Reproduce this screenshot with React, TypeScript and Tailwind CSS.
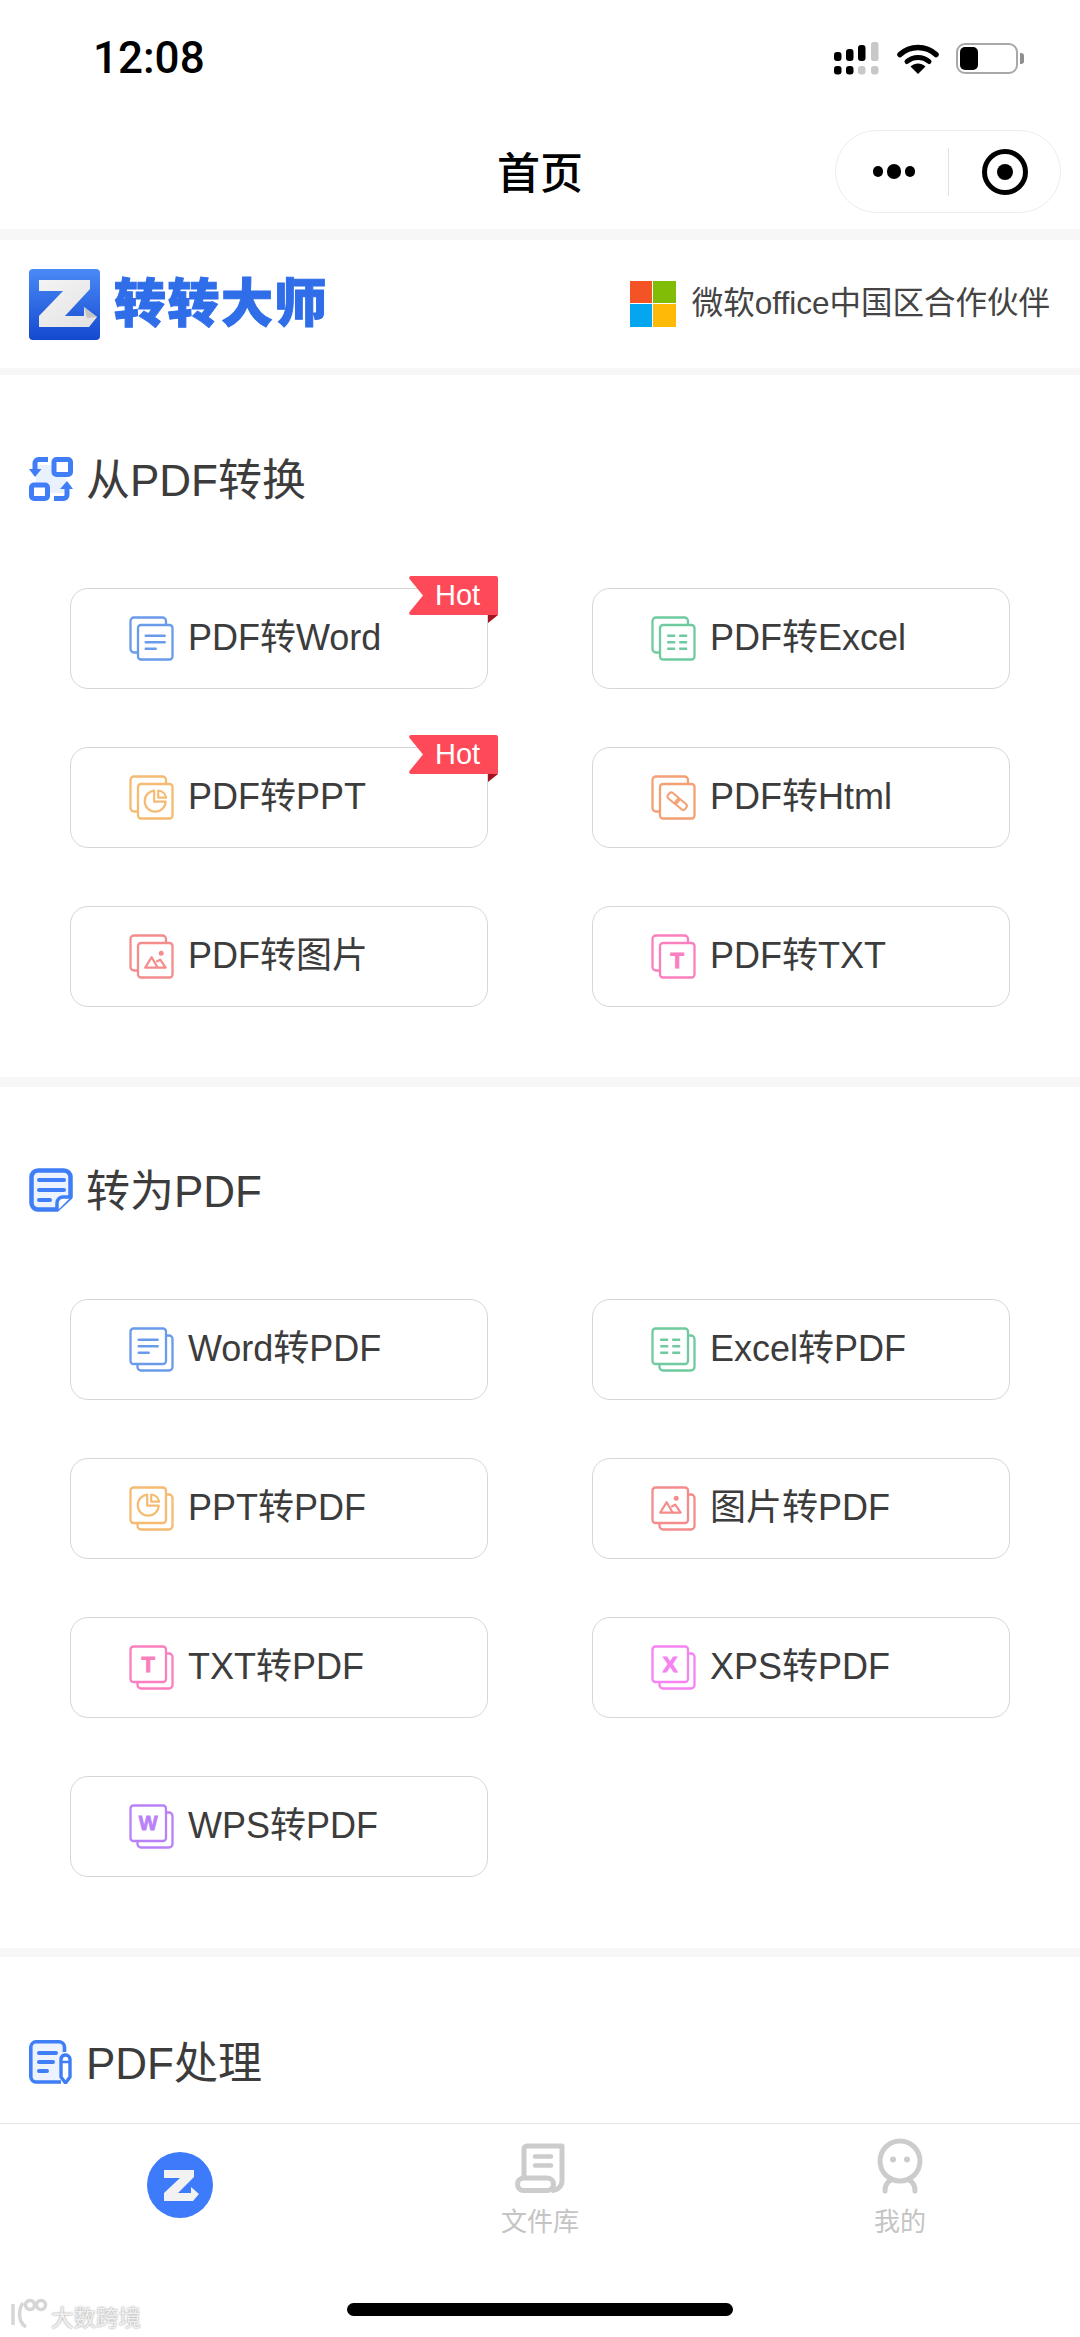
import React from "react";

type Kind = "word" | "excel" | "ppt" | "html" | "image" | "txt" | "xps" | "wps";
const colors: Record<Kind, string> = {
  word: "#6a9bea",
  excel: "#6fcb9f",
  ppt: "#f5bb72",
  html: "#f3a074",
  image: "#f58c8c",
  txt: "#fb7fbf",
  xps: "#f583f2",
  wps: "#b981f8",
};

function Glyph({ kind, c }: { kind: Kind; c: string }) {
  // centred on 0,0 of the front page
  switch (kind) {
    case "word":
      return (
        <g stroke={c} strokeWidth="2.400" fill="none" strokeLinecap="round">
          <path d="M-9.500 -6.500H9.500M-9.500 0H9.500M-9.500 6.500H0.500" />
        </g>
      );
    case "excel":
      return (
        <g stroke={c} strokeWidth="2.500" fill="none">
          <path d="M-10 -6.500H-2M2 -6.500H10M-10 0H-2M2 0H10M-10 6.500H-2M2 6.500H10" />
        </g>
      );
    case "ppt":
      return (
        <g stroke={c} strokeWidth="2.200" fill="none" strokeLinejoin="round">
          <path d="M-1 -10.500A10.500 10.500 0 1 0 10.500 0.500H-1Z" />
          <path d="M3 -10.500A8.500 8.500 0 0 1 11 -3.500H3Z" />
        </g>
      );
    case "html":
      return (
        <g stroke={c} strokeWidth="2" fill="none" transform="rotate(40)">
          <rect x="-11" y="-3.500" width="12" height="7" rx="2.500" />
          <rect x="-1" y="-3.500" width="12" height="7" rx="2.500" />
        </g>
      );
    case "image":
      return (
        <g stroke={c} strokeWidth="2.200" fill="none" strokeLinejoin="round">
          <path d="M-10 7.500L-3.500 -3L2.500 7.500Z" />
          <path d="M1 1.500L5 -0.500L10.500 7.500H2" />
          <circle cx="6" cy="-7" r="1.400" fill={c} />
        </g>
      );
    case "txt":
      return (
        <text x="0" y="8" textAnchor="middle" fontSize="22" fontWeight="900" fill={c} stroke={c} strokeWidth="1" fontFamily="'Liberation Sans',sans-serif">T</text>
      );
    case "xps":
      return (
        <text x="0" y="8" textAnchor="middle" fontSize="22" fontWeight="900" fill={c} stroke={c} strokeWidth="1" fontFamily="'Liberation Sans',sans-serif">X</text>
      );
    case "wps":
      return (
        <text x="0" y="7" textAnchor="middle" fontSize="20" fontWeight="900" fill={c} stroke={c} strokeWidth="0.800" fontFamily="'Liberation Sans',sans-serif">W</text>
      );
  }
}

function StackIcon({ kind, front }: { kind: Kind; front: "br" | "tl" }) {
  const c = colors[kind];
  return (
    <svg width="45" height="45" viewBox="0 0 45 45" className="shrink-0">
      {front === "br" ? (
        <>
          <path d="M37 8V5A3.500 3.500 0 0 0 33.500 1.500H5A3.500 3.500 0 0 0 1.500 5V33A3.500 3.500 0 0 0 5 36.500H8.500" fill="none" stroke={c} strokeWidth="2.300" />
          <rect x="9" y="9" width="34.500" height="34.500" rx="3" fill="#fff" stroke={c} strokeWidth="2.300" />
          <g transform="translate(26.200 26.200)">
            <Glyph kind={kind} c={c} />
          </g>
        </>
      ) : (
        <>
          <path d="M37.500 8.500H40A3.500 3.500 0 0 1 43.500 12V40A3.500 3.500 0 0 1 40 43.500H12A3.500 3.500 0 0 1 8.500 40V37.500" fill="none" stroke={c} strokeWidth="2.300" />
          <rect x="1.500" y="1.500" width="35.500" height="35.500" rx="3" fill="#fff" stroke={c} strokeWidth="2.300" />
          <g transform="translate(19.200 19.200)">
            <Glyph kind={kind} c={c} />
          </g>
        </>
      )}
    </svg>
  );
}

function HotBadge() {
  return (
    <div className="absolute top-[-13px] right-[-11px] w-[89px] h-[47px]">
      <svg width="89" height="47" viewBox="0 0 89 47" className="absolute inset-0">
        <path d="M79 39H89L79 47Z" fill="#a5121f" />
        <path d="M2 0H87A2 2 0 0 1 89 2V39H2A2 2 0 0 1 0.500 36L14 19.500L0.500 3A2 2 0 0 1 2 0Z" fill="#fe4a58" />
      </svg>
      <span className="absolute left-[26px] top-0 h-[39px] flex items-center text-[29px] leading-none text-[#fff] font-light">Hot</span>
    </div>
  );
}

type Item = { label: string; kind: Kind; hot?: boolean };

function ToolButton({ item, front }: { item: Item; front: "br" | "tl" }) {
  return (
    <div className="relative h-[101px] rounded-[18px] border border-[#d6d6d6] bg-white flex items-center pl-[58px] gap-[14px]">
      <StackIcon kind={item.kind} front={front} />
      <span className="text-[36px] leading-none text-[#3c3c3c] -mt-[2px]">{item.label}</span>
      {item.hot && <HotBadge />}
    </div>
  );
}

function ConvertIcon() {
  return (
    <svg width="44" height="44" viewBox="0 0 44 44" className="shrink-0">
      <rect x="7" y="8" width="30" height="28" fill="#e9f0fe" />
      <rect x="25" y="2.500" width="16.500" height="15" rx="2.500" fill="#fff" stroke="#3f7ef6" strokeWidth="5" />
      <rect x="2.500" y="28" width="16" height="13.500" rx="2.500" fill="#fff" stroke="#3f7ef6" strokeWidth="5" />
      <path d="M19 2.500H9.500A3.500 3.500 0 0 0 6 6V13" fill="none" stroke="#3f7ef6" strokeWidth="5" />
      <path d="M0 12H12.500L6 20Z" fill="#3f7ef6" />
      <path d="M25 41.500H34.500A3.500 3.500 0 0 0 38 38V31" fill="none" stroke="#3f7ef6" strokeWidth="5" />
      <path d="M31 32H44L38 24Z" fill="#3f7ef6" />
    </svg>
  );
}

function NoteIcon() {
  return (
    <svg width="44" height="44" viewBox="0 0 44 44" className="shrink-0">
      <path d="M9 2.500H35A6.500 6.500 0 0 1 41.500 9V29L28 41.500H9A6.500 6.500 0 0 1 2.500 35V9A6.500 6.500 0 0 1 9 2.500Z" fill="#edf3fe" stroke="#3f7ef6" strokeWidth="4.500" strokeLinejoin="round" />
      <path d="M10 12H35M10 22H35M10 32H21" stroke="#3f7ef6" strokeWidth="4" strokeLinecap="round" />
      <path d="M42 29H34A6 6 0 0 0 28 35V43" fill="#fff" stroke="#3f7ef6" strokeWidth="3.500" />
    </svg>
  );
}

function ProcessIcon() {
  return (
    <svg width="44" height="44" viewBox="0 0 44 44" className="shrink-0">
      <path d="M32 42H7A5.500 5.500 0 0 1 1.800 36.500V7A5.500 5.500 0 0 1 7 1.800H30A5.500 5.500 0 0 1 35.500 7V12" fill="#edf3fe" stroke="#3f7ef6" strokeWidth="3.600" />
      <path d="M10 13H27M10 22H24M10 31H18" stroke="#3f7ef6" strokeWidth="4" strokeLinecap="round" />
      <path d="M36 15A4.500 4.500 0 0 1 41 19V37L36.500 43L32 37V19A4.500 4.500 0 0 1 36 15Z" fill="#fff" stroke="#3f7ef6" strokeWidth="3.400" strokeLinejoin="round" />
      <path d="M32 22H41" stroke="#3f7ef6" strokeWidth="2.500" />
    </svg>
  );
}

function Section({ icon, title, className, children }: { icon: React.ReactNode; title: string; className: string; children?: React.ReactNode }) {
  return (
    <section className={className}>
      <div className="flex items-center h-[44px] pl-[29px] gap-[13px]">
        {icon}
        <h2 className="text-[44px] leading-none font-normal text-[#3c3c3c] mt-[3px]">{title}</h2>
      </div>
      {children}
    </section>
  );
}

function Band({ h }: { h: string }) {
  return <div className={`${h} bg-[#f7f7f7] shrink-0`} />;
}

function Grid({ items, front }: { items: Item[]; front: "br" | "tl" }) {
  return (
    <div className="grid grid-cols-[418px_418px] gap-x-[104px] gap-y-[58px] pl-[70px] mt-[87px]">
      {items.map((it) => (
        <ToolButton key={it.label} item={it} front={front} />
      ))}
    </div>
  );
}

const fromPdf: Item[] = [
  { label: "PDF转Word", kind: "word", hot: true },
  { label: "PDF转Excel", kind: "excel" },
  { label: "PDF转PPT", kind: "ppt", hot: true },
  { label: "PDF转Html", kind: "html" },
  { label: "PDF转图片", kind: "image" },
  { label: "PDF转TXT", kind: "txt" },
];
const toPdf: Item[] = [
  { label: "Word转PDF", kind: "word" },
  { label: "Excel转PDF", kind: "excel" },
  { label: "PPT转PDF", kind: "ppt" },
  { label: "图片转PDF", kind: "image" },
  { label: "TXT转PDF", kind: "txt" },
  { label: "XPS转PDF", kind: "xps" },
  { label: "WPS转PDF", kind: "wps" },
];

function Logo() {
  return (
    <svg width="72" height="71" viewBox="0 0 72 71" className="shrink-0">
      <defs>
        <linearGradient id="lg" x1="0" y1="0" x2="0" y2="1">
          <stop offset="0" stopColor="#4a8af7" />
          <stop offset="1" stopColor="#1449cf" />
        </linearGradient>
        <linearGradient id="zg" x1="0" y1="0" x2="1" y2="1">
          <stop offset="0" stopColor="#f4f4f4" />
          <stop offset="1" stopColor="#e2e2e2" />
        </linearGradient>
      </defs>
      <rect x="0" y="0" width="71" height="71" rx="4" fill="url(#lg)" />
      <path d="M10 11H61V20L36 47H55V38L68 48L60 58H10V47L34 22H10Z" fill="url(#zg)" />
      <path d="M55 38L68 48L58 49Z" fill="#c4c4c4" />
    </svg>
  );
}

function MsLogo() {
  return (
    <div className="grid grid-cols-[22px_23px] grid-rows-[22px_23px] gap-[1px] shrink-0">
      <div className="bg-[#f35325]" />
      <div className="bg-[#81bc06]" />
      <div className="bg-[#05a6f0]" />
      <div className="bg-[#ffba08]" />
    </div>
  );
}

function Signal() {
  const dark = "#000";
  const light = "#c8c8c8";
  return (
    <svg width="46" height="33" viewBox="0 0 46 33">
      <rect x="0" y="10" width="7.500" height="9" rx="3" fill={dark} />
      <rect x="12" y="7" width="7.500" height="12" rx="3" fill={dark} />
      <rect x="24" y="3" width="7.500" height="16" rx="3" fill={dark} />
      <rect x="37" y="0" width="7.500" height="19" rx="2.500" fill={light} />
      <rect x="0" y="24" width="7.500" height="8.500" rx="3" fill={dark} />
      <rect x="12" y="24" width="7.500" height="8.500" rx="3" fill={dark} />
      <rect x="24" y="24" width="7.500" height="8.500" rx="3" fill={light} />
      <rect x="37" y="24" width="7.500" height="8.500" rx="3" fill={light} />
    </svg>
  );
}

function Wifi() {
  return (
    <svg width="42" height="31" viewBox="0 0 42 31">
      <path d="M3 11.500C13 2 29 2 39 11.500" fill="none" stroke="#000" strokeWidth="5.500" strokeLinecap="round" />
      <path d="M10 18.500C16 13 26 13 32 18.500" fill="none" stroke="#000" strokeWidth="5" strokeLinecap="round" />
      <path d="M13.500 23.500C18 19.500 24 19.500 28.500 23.500L21 31Z" fill="#000" />
    </svg>
  );
}

function Battery() {
  return (
    <div className="flex items-center gap-[2px]">
      <div className="w-[62px] h-[31px] rounded-[9px] border-[2.500px] border-[#a8a8a8] p-[2px] bg-white">
        <div className="w-[18px] h-full rounded-[5px] bg-black" />
      </div>
      <div className="w-[4px] h-[11px] bg-[#8e8e8e] rounded-r-[3px]" />
    </div>
  );
}

function ScrollIcon() {
  return (
    <svg width="50" height="50" viewBox="0 0 50 50">
      <path d="M9 33V6A3 3 0 0 1 12 3H47V38A10 10 0 0 1 37 47.500" fill="none" stroke="#cccccc" strokeWidth="5" strokeLinejoin="round" />
      <path d="M20 13.500H36M20 22.500H36" stroke="#cccccc" strokeWidth="4.500" strokeLinecap="round" />
      <rect x="2.500" y="35" width="36" height="12.500" rx="6.200" fill="#fff" stroke="#cccccc" strokeWidth="5" />
      <circle cx="32" cy="41.200" r="2.500" fill="#fff" />
    </svg>
  );
}

function PersonIcon() {
  return (
    <svg width="46" height="56" viewBox="0 0 46 56">
      <circle cx="23" cy="23" r="20" fill="none" stroke="#cccccc" strokeWidth="5" />
      <circle cx="16" cy="21.500" r="3" fill="#cccccc" />
      <circle cx="30" cy="21.500" r="3" fill="#cccccc" />
      <path d="M8 53C8 47 10 44 14 42M38 53C38 47 36 44 32 42" fill="none" stroke="#cccccc" strokeWidth="5" strokeLinecap="round" />
    </svg>
  );
}

function ZCircle() {
  return (
    <svg width="66" height="66" viewBox="0 0 66 66">
      <circle cx="33" cy="33" r="33" fill="#3d7bfa" />
      <path d="M17 18H47V25L31 41H44V35L52 42L46 49H17V41L33 26H17Z" fill="#f2f2f2" />
    </svg>
  );
}

export default function App() {
  return (
    <div className="w-[1080px] h-[2337px] relative overflow-hidden bg-white flex flex-col [font-family:'Liberation_Sans','Noto_Sans_CJK_SC',sans-serif]">
      <header className="h-[229px] shrink-0">
        <div className="h-[120px] flex items-center justify-between pl-[93px] pr-[56px] pb-[4px]">
          <span className="text-[44px] leading-none font-medium text-black [font-family:Roboto,sans-serif]">12:08</span>
          <div className="flex items-center gap-[17px]">
            <Signal />
            <Wifi />
            <Battery />
          </div>
        </div>
        <div className="grid grid-cols-[1fr_auto_1fr] items-start">
          <div />
          <h1 className="h-[83px] mt-[13px] flex items-center text-[43px] leading-none font-medium text-black">首页</h1>
          <div className="flex justify-end pr-[19px]">
            <div className="mt-[10px] w-[226px] h-[83px] rounded-[42px] border border-[#ececec] bg-white flex items-center">
              <div className="w-[112px] flex justify-center items-center gap-[4px] pl-[3px]">
                <span className="w-[10px] h-[11px] rounded-full bg-black" />
                <span className="w-[14px] h-[15px] rounded-full bg-black" />
                <span className="w-[10px] h-[11px] rounded-full bg-black" />
              </div>
              <div className="w-px h-[48px] bg-[#e2e2e2]" />
              <div className="flex-1 flex justify-center">
                <div className="w-[46px] h-[46px] rounded-full border-[5px] border-black flex items-center justify-center">
                  <span className="w-[16px] h-[16px] rounded-full bg-black" />
                </div>
              </div>
            </div>
          </div>
        </div>
      </header>
      <Band h="h-[11px]" />
      <div className="h-[128px] shrink-0 flex items-center justify-between pl-[29px] pr-[30px]">
        <div className="flex items-center gap-[13px]">
          <Logo />
          <span className="text-[52px] leading-none font-black tracking-[1.500px] text-[#2f6de9] [-webkit-text-stroke:1px_#2f6de9]">转转大师</span>
        </div>
        <div className="flex items-center gap-[16px]">
          <MsLogo />
          <span className="text-[31.500px] leading-none text-[#444444]">微软office中国区合作伙伴</span>
        </div>
      </div>
      <Band h="h-[7px]" />
      <Section icon={<ConvertIcon />} title="从PDF转换" className="h-[702px] shrink-0 pt-[82px]">
        <Grid items={fromPdf} front="br" />
      </Section>
      <Band h="h-[10px]" />
      <Section icon={<NoteIcon />} title="转为PDF" className="h-[861px] shrink-0 pt-[81px]">
        <Grid items={toPdf} front="tl" />
      </Section>
      <Band h="h-[9px]" />
      <Section icon={<ProcessIcon />} title="PDF处理" className="flex-1 pt-[83px]" />
      <nav className="h-[214px] shrink-0 border-t border-[#e6e6e6] bg-white relative">
        <div className="grid grid-cols-3 h-[179px]">
          <div className="flex justify-center pt-[28px]">
            <ZCircle />
          </div>
          <div className="flex flex-col items-center pt-[19px]">
            <ScrollIcon />
            <span className="mt-[16px] text-[26px] leading-none text-[#c4c4c4]">文件库</span>
          </div>
          <div className="flex flex-col items-center pt-[14px]">
            <PersonIcon />
            <span className="mt-[15px] text-[26px] leading-none text-[#c4c4c4]">我的</span>
          </div>
        </div>
        <div className="w-[386px] h-[13px] rounded-full bg-black mx-auto" />
        <div className="absolute left-[10px] bottom-[7px] flex items-end gap-[3px]">
          <svg width="38" height="32" viewBox="0 0 38 32">
            <g fill="none" stroke="#d6d6d6" strokeWidth="3.500">
              <path d="M3 6V27M13 5C8 12 8 24 16 29" />
              <circle cx="20" cy="7" r="4.500" />
              <circle cx="31" cy="7" r="4.500" />
            </g>
          </svg>
          <span className="text-[22.500px] leading-none text-[#f0f0f0] [text-shadow:0_0_2px_#888]">大数跨境</span>
        </div>
      </nav>
    </div>
  );
}
